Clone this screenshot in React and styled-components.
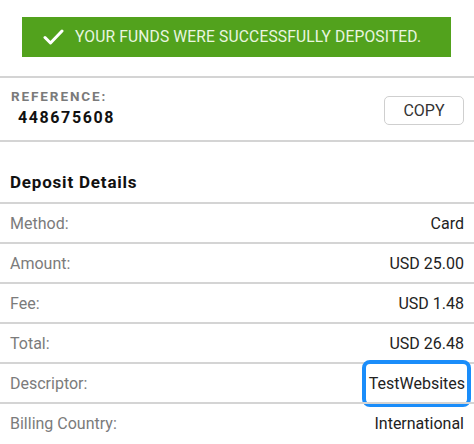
import React from "react";
import styled, { createGlobalStyle } from "styled-components";

const Global = createGlobalStyle`
  html, body { margin: 0; padding: 0; background: #fff; }
  body { font-family: Roboto, "Noto Sans", sans-serif; color: #222; }
`;

const Page = styled.div`
  width: 474px;
  display: flex;
  flex-direction: column;
`;

const Banner = styled.div`
  margin: 17px 23px 19px 22px;
  height: 40px;
  background: #52a21d;
  color: #eaf6e0;
  display: flex;
  align-items: center;
  padding-left: 21px;
  gap: 11px;
  font-size: 15.6px;
  letter-spacing: 0.15px;
`;

const Section = styled.div`
  border-top: 2px solid #d4d4d4;
  display: flex;
  align-items: center;
  justify-content: space-between;
  box-sizing: border-box;
  height: ${(p) => p.$h}px;
  padding: 0 10px 0 10px;
`;

const RefBlock = styled.div`
  display: flex;
  flex-direction: column;
  gap: 4px;
  margin-top: -3px;
`;

const RefLabel = styled.div`
  font-size: 13.5px;
  font-weight: 700;
  color: #7a7a7a;
  letter-spacing: 1.9px;
  margin-left: 1px;
`;

const RefNumber = styled.div`
  font-size: 16px;
  font-weight: 700;
  color: #111;
  letter-spacing: 1.6px;
  margin-left: 8px;
`;

const CopyButton = styled.button`
  width: 80px;
  height: 29px;
  border: 1px solid #cfcfcf;
  border-radius: 5px;
  background: #fff;
  font-family: inherit;
  font-size: 16px;
  color: #333;
  margin-top: 3px;
  padding: 0;
`;

const Heading = styled.div`
  font-size: 17px;
  font-weight: 700;
  color: #111;
  letter-spacing: 0.8px;
  padding-top: 20px;
`;

const Label = styled.span`
  font-size: 16px;
  color: #7b7b7b;
`;

const Value = styled.span`
  font-size: 16px;
  color: #222;
`;

const Highlight = styled.span`
  font-size: 16px;
  color: #222;
  border: 4px solid #1a8dfa;
  border-radius: 8px;
  padding: 10px 2px 10px 3px;
  margin-right: -7px;
`;

const rows = [
  ["Method:", "Card"],
  ["Amount:", "USD 25.00"],
  ["Fee:", "USD 1.48"],
  ["Total:", "USD 26.48"],
  ["Descriptor:", "TestWebsites", true],
  ["Billing Country:", "International"],
];

function Check() {
  return (
    <svg width="21" height="16" viewBox="0 0 21 16">
      <path d="M2 8.5 L7.5 14 L19 2" fill="none" stroke="#fff" strokeWidth="3" strokeLinecap="round" strokeLinejoin="round" />
    </svg>
  );
}

export default function App() {
  return (
    <>
      <Global />
      <Page>
        <Banner>
          <Check />
          <span>YOUR FUNDS WERE SUCCESSFULLY DEPOSITED.</span>
        </Banner>
        <Section $h={64}>
          <RefBlock>
            <RefLabel>REFERENCE:</RefLabel>
            <RefNumber>448675608</RefNumber>
          </RefBlock>
          <CopyButton>COPY</CopyButton>
        </Section>
        <Section $h={62}>
          <Heading>Deposit Details</Heading>
        </Section>
        {rows.map(([l, v, h]) => (
          <Section $h={40} key={l}>
            <Label>{l}</Label>
            {h ? <Highlight>{v}</Highlight> : <Value>{v}</Value>}
          </Section>
        ))}
      </Page>
    </>
  );
}
